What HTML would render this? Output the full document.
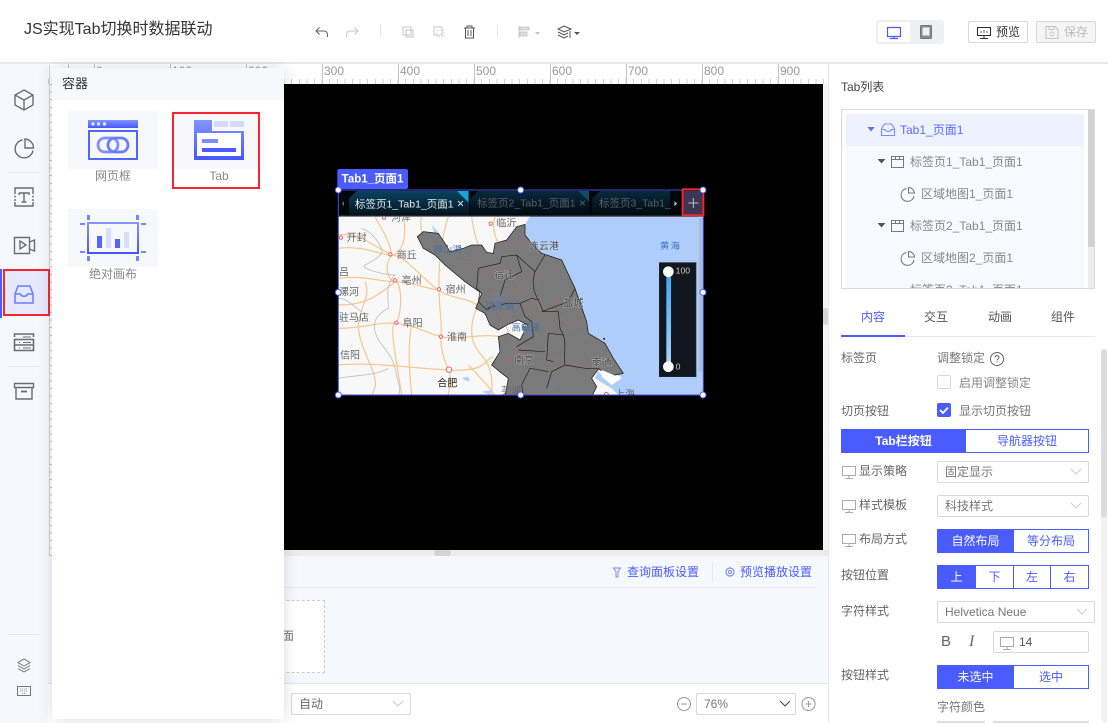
<!DOCTYPE html>
<html lang="zh"><head><meta charset="utf-8"><title>JS实现Tab切换时数据联动</title>
<style>
*{box-sizing:border-box}
html,body{margin:0;padding:0;width:1108px;height:723px;overflow:hidden;background:#fff;font-family:"Liberation Sans","Noto Sans CJK SC",sans-serif;font-size:12px;color:#666}
.a{position:absolute}
.t{position:absolute;white-space:nowrap;line-height:16px;font-size:12px;color:#666}
.sel{position:absolute;border:1px solid #d9d9d9;border-radius:2px;background:#fff;height:22px;line-height:20px;padding-left:7px;font-size:12px;color:#777}
.sel svg{position:absolute;right:6px;top:6px}
.b{position:absolute;text-align:center;font-size:12px;border:1px solid #4a5cff;color:#4a5cff;background:#fff;height:24px;line-height:22px}
.b.on{background:#4a5cff;color:#fff}
.tk{position:absolute;top:64px;width:1px;height:20px;background:#c4c4c4}
.rl{position:absolute;top:64px;color:#999;font-size:12px;line-height:14px}
svg{position:absolute;overflow:visible}
</style></head><body>

<!-- header -->
<div class="a" style="left:0;top:0;width:1108px;height:64px;background:#fff;border-bottom:2px solid #e6e8ee"></div>
<div class="t" style="left:24px;top:20px;font-size:16px;line-height:20px;color:#333">JS实现Tab切换时数据联动</div>

<svg style="left:0;top:0" width="1108" height="64" fill="none">
<path d="M319.500 27.500l-3.500 3.500 3.500 3.500M316 31h8a3.500 3.500 0 0 1 3.500 3.500V37" stroke="#666" stroke-width="1"/>
<path d="M354.500 27.500l3.500 3.500-3.500 3.500M358 31h-8a3.500 3.500 0 0 0-3.500 3.500V37" stroke="#c8c8c8" stroke-width="1"/>
<path d="M380.500 24v14M497.500 24v14" stroke="#e8e8e8"/>
<path d="M403 27h8v8h-8zM406 30h7v7h-7z" stroke="#c4c4c4"/>
<path d="M434 27h8v8h-8z" stroke="#c4c4c4"/><path d="M437 30h7v7h-7z" stroke="#ddd" stroke-dasharray="2 1"/>
<path d="M464 28h11M467 28v-2h5v2M465.500 28v10h8V28M468 30v6M471 30v6" stroke="#555"/>
<path d="M519 26v12" stroke="#c4c4c4"/><path d="M520 27h9v3h-9zM520 32h7v4h-7z" fill="#ddd" stroke="#c4c4c4" stroke-width=".8"/>
<path d="M535 32h5l-2.500 3z" fill="#c4c4c4"/>
<path d="M564 26l7 3-7 3-6-3zM558 32l6 3 4-2M558 35l6 3 4-2M570 31v7" stroke="#555"/>
<path d="M574 32h6l-3 3z" fill="#555"/>
</svg>

<div class="a" style="left:876px;top:20px;width:68px;height:24px;background:#eef0f4;border-radius:3px"></div>
<div class="a" style="left:878px;top:22px;width:32px;height:20px;background:#fff;border-radius:2px"></div>
<svg style="left:0;top:0" width="1108" height="64" fill="none">
<path d="M887.500 27.500h13v9h-13zM894 37v1.500M890 38.500h8" stroke="#4a5cff" stroke-width="1.200"/>
<rect x="920.500" y="25.500" width="11" height="13" rx="1" fill="#8a8a8a" stroke="#777"/><rect x="922.500" y="27.500" width="7" height="8" fill="#eef0f4"/>
</svg>
<div class="a" style="left:968px;top:21px;width:60px;height:22px;border:1px solid #d9d9d9;border-radius:2px;background:#fff"></div>
<svg style="left:0;top:0" width="1108" height="64" fill="none"><path d="M977.500 27.500h13v8h-13zM984 36v2M980 38.500h8" stroke="#333" stroke-width="1.100"/><path d="M981 33v-2M984 33v-3M987 33v-2" stroke="#555"/></svg>
<div class="t" style="left:996px;top:24px;color:#333">预览</div>
<div class="a" style="left:1036px;top:21px;width:60px;height:22px;border:1px solid #d9d9d9;border-radius:2px;background:#f5f5f5"></div>
<svg style="left:0;top:0" width="1108" height="64" fill="none"><path d="M1046 26.500h9l3 3v9h-12zM1049 26.500v3h5v-3" stroke="#c4c4c4"/><circle cx="1052" cy="34" r="2" stroke="#c4c4c4"/></svg>
<div class="t" style="left:1064px;top:24px;color:#bbb">保存</div>

<!-- canvas zone -->
<div class="a" style="left:48px;top:64px;width:780px;height:492px;background:#f4f4f4"></div>
<div class="a" style="left:48px;top:64px;width:780px;height:20px;background:#fff"></div>
<div class="a" style="left:48px;top:79px;width:780px;height:5px;background:repeating-linear-gradient(90deg,#d0d0d0 0,#d0d0d0 1px,transparent 1px,transparent 7.6px)"></div>
<div class="a" style="left:50px;top:84px;width:2px;height:472px;background:repeating-linear-gradient(180deg,#c4c4c4 0,#c4c4c4 1px,#fff 1px,#fff 7.6px)"></div>
<div class="tk" style="left:68px"></div>
<div class="tk" style="left:94px"></div><div class="rl" style="left:96px">0</div>
<div class="tk" style="left:170px"></div><div class="rl" style="left:172px">100</div>
<div class="tk" style="left:246px"></div><div class="rl" style="left:248px">200</div>
<div class="tk" style="left:322px"></div><div class="rl" style="left:324px">300</div>
<div class="tk" style="left:398px"></div><div class="rl" style="left:400px">400</div>
<div class="tk" style="left:474px"></div><div class="rl" style="left:476px">500</div>
<div class="tk" style="left:550px"></div><div class="rl" style="left:552px">600</div>
<div class="tk" style="left:626px"></div><div class="rl" style="left:628px">700</div>
<div class="tk" style="left:702px"></div><div class="rl" style="left:704px">800</div>
<div class="tk" style="left:778px"></div><div class="rl" style="left:780px">900</div>
<div class="a" style="left:284px;top:84px;width:539px;height:466px;background:#000"></div>
<div class="a" style="left:284px;top:550px;width:544px;height:6px;background:#ececec"></div>
<div class="a" style="left:434px;top:550px;width:17px;height:6px;background:#d4d4d4;border-radius:3px"></div>
<div class="a" style="left:823px;top:308px;width:5px;height:17px;background:#d4d4d4;border-radius:3px"></div>

<!-- bottom area -->
<div class="a" style="left:48px;top:556px;width:780px;height:128px;background:#f5f9fd;border-bottom:1px solid #e3e6ea"></div>
<div class="a" style="left:284px;top:587px;width:532px;height:1px;background:#e6eaee"></div>
<div class="a" style="left:200px;top:600px;width:125px;height:73px;background:#fff;border:1px dashed #ccc"></div>
<div class="t" style="left:282px;top:628px;color:#777">面</div>
<svg style="left:0;top:0" width="1108" height="723" fill="none">
<path d="M613.500 568h7l-2.500 3.500V577h-2v-5.500z" stroke="#7b8cff"/>
<circle cx="730" cy="572" r="4" stroke="#7b8cff" stroke-width="1.200"/><circle cx="730" cy="572" r="1.500" stroke="#7b8cff"/>
<path d="M712.500 562v20" stroke="#e6eaee"/>
</svg>
<div class="t" style="left:627px;top:564px;color:#4a5cff">查询面板设置</div>
<div class="t" style="left:740px;top:564px;color:#4a5cff">预览播放设置</div>
<div class="sel" style="left:291px;top:693px;width:120px;color:#666">自动<svg width="12" height="8" fill="none"><path d="M1 1l5 5 5-5" stroke="#ccc"/></svg></div>
<div class="sel" style="left:696px;top:693px;width:100px;color:#777">76%<svg width="12" height="8" fill="none" style="right:4px"><path d="M1 1l5 5 5-5" stroke="#444" stroke-width="1.100"/></svg></div>
<svg style="left:0;top:0" width="1108" height="723" fill="none">
<circle cx="684" cy="704" r="6.500" stroke="#999"/><path d="M681 704h6" stroke="#999"/>
<circle cx="808.500" cy="704" r="6.500" stroke="#999"/><path d="M805.500 704h6M808.500 701v6" stroke="#999"/>
</svg>

<!-- left sidebar -->
<div class="a" style="left:0;top:64px;width:48px;height:659px;background:#f5f9fd"></div>
<div class="a" style="left:49px;top:64px;width:1px;height:492px;background:#d4d4d4"></div>
<div class="a" style="left:3px;top:269px;width:47px;height:47px;background:#e5e9fb;border:2px solid #f8252f"></div>
<div class="a" style="left:0;top:269px;width:2px;height:49px;background:#4a5cff"></div>
<svg style="left:0;top:0" width="50" height="723" fill="none" stroke="#6a6d73" stroke-width="1.400">
<path d="M24 90l9 5v10l-9 5-9-5V95zM15 95l9 5 9-5M24 100v10"/>
<path d="M22.500 140a9 9 0 1 0 10.500 10.500"/><path d="M25 139v9h8.500a9 9 0 0 0-8.500-9z"/>
<path d="M8 172.500h32M8 366.500h32M8 634.500h32" stroke="#e6eaee" stroke-width="1"/>
<path d="M15 192v-4h18v4M15 202v4h18v-4"/><path d="M15 192v10M33 192v10" stroke-dasharray="2 1.500"/><path d="M19 193h10v2M24 193v9M21.500 202h5M19 195v-2"/>
<path d="M14.500 237.500h15v16h-15zM29.500 242l5-2v11l-5-2"/><path d="M20 241l6 4-6 4z"/>
<path d="M18 286h12l3 8v9H15v-9zM15 294h5.500c1 3 6 3 7 0H33" stroke="#6b7bff" stroke-width="1.500"/>
<path d="M14.500 337v-3h19v3M14.500 339.500h19v5.500h-19zM14.500 345h19v5.500h-19z" stroke-width="1.600"/><path d="M19 342.500h1M23 342.500h8M19 348h1M23 348h8M23 337h8" stroke-width="1"/>
<path d="M14.500 383.500h19v4h-19zM16 387.500v11.500h16v-11.500"/><path d="M21 391.500h6" stroke-width="1.800"/>
<path d="M24 659l6 3.500-6 3.500-6-3.500zM18 665.500l6 3.500 6-3.500M18 668.500l6 3.500 6-3.500" stroke="#777" stroke-width="1"/>
<path d="M17.500 686.500h13v9h-13z" stroke="#777" stroke-width="1"/><path d="M20 689h8M20 691h8M22 693.500h4" stroke="#999" stroke-width="1" stroke-dasharray="1 1"/>
</svg>

<!-- popup -->
<div class="a" style="left:52px;top:68px;width:232px;height:651px;background:#fff;box-shadow:0 0 14px rgba(0,0,0,.14)"></div>
<div class="a" style="left:52px;top:68px;width:232px;height:32px;background:#f6f8fb"></div>
<div class="t" style="left:62px;top:76px;color:#333;font-size:13px">容器</div>
<div class="a" style="left:68px;top:111px;width:90px;height:58px;background:#f6f8fc"></div>
<div class="a" style="left:172px;top:111px;width:92px;height:58px;background:#f6f8fc"></div>
<div class="a" style="left:68px;top:209px;width:90px;height:58px;background:#f6f8fc"></div>
<div class="a" style="left:172px;top:112px;width:88px;height:77px;border:2px solid #f8252f"></div>
<div class="t" style="left:68px;top:168px;width:90px;text-align:center;color:#888">网页框</div>
<div class="t" style="left:173px;top:168px;width:92px;text-align:center;color:#888">Tab</div>
<div class="t" style="left:68px;top:266px;width:90px;text-align:center;color:#888">绝对画布</div>
<svg style="left:0;top:0" width="284" height="300" fill="none">
<defs><linearGradient id="g" x1="0" y1="0" x2="0" y2="1"><stop offset="0" stop-color="#8494ff"/><stop offset="1" stop-color="#4358ff"/></linearGradient></defs>
<!-- web frame -->
<rect x="88" y="120" width="50" height="8" fill="url(#g)"/>
<circle cx="93" cy="124" r="1.700" fill="#dfe3ff"/><circle cx="98.500" cy="124" r="1.700" fill="#dfe3ff"/><circle cx="104.500" cy="124" r="1.700" fill="#dfe3ff"/>
<rect x="89" y="131" width="48" height="28" stroke="#5066ff" stroke-width="2"/>
<rect x="98" y="138" width="20" height="14" rx="7" stroke="#7f90ff" stroke-width="2.800"/>
<rect x="108" y="138" width="20" height="14" rx="7" stroke="#6a7dff" stroke-width="2.800"/>
<!-- tab -->
<path d="M194 120h18v11h32v29h-50z" fill="url(#g)"/>
<rect x="197" y="133" width="44" height="23" fill="#fff"/>
<rect x="214" y="121" width="14" height="6" fill="#d3daff"/><rect x="230" y="121" width="14" height="6" fill="#d3daff"/>
<rect x="202" y="139" width="16" height="4" fill="#7b8cff"/><rect x="202" y="148" width="34" height="4" fill="#4a5cff"/>
<!-- canvas -->
<rect x="88" y="223" width="50" height="30" stroke="url(#g)" stroke-width="2"/>
<rect x="97" y="236" width="5" height="12" fill="#5066ff"/><rect x="106" y="228" width="5" height="20" fill="#d8deff"/><rect x="115" y="239" width="5" height="9" fill="#5066ff"/><rect x="124" y="232" width="5" height="16" fill="#d8deff"/>
<path d="M87 215h3v5h-3zM136 215h3v5h-3zM80 223h5v2h-5zM141 223h5v2h-5zM80 251h5v2h-5zM141 251h5v2h-5zM87 256h3v5h-3zM136 256h3v5h-3z" fill="#7486ff"/>
</svg>

<!-- map component -->
<svg style="left:335px;top:165px" width="375" height="235" viewBox="0 0 1125 705" font-family="Liberation Sans, Noto Sans CJK SC, sans-serif">
<defs><clipPath id="mc"><rect x="10" y="155" width="1095" height="535"/></clipPath>
<linearGradient id="lg" x1="0" y1="0" x2="0" y2="1"><stop offset="0" stop-color="#39a5f7"/><stop offset="1" stop-color="#a9d8fa"/></linearGradient>
<linearGradient id="tg" x1="0" y1="0" x2="0" y2="1"><stop offset="0" stop-color="#0b4360"/><stop offset="1" stop-color="#03141f"/></linearGradient>
<linearGradient id="tg2" x1="0" y1="0" x2="0" y2="1"><stop offset="0" stop-color="#072a3d"/><stop offset="1" stop-color="#010a10"/></linearGradient></defs>
<g clip-path="url(#mc)">
<rect x="10" y="155" width="1095" height="535" fill="#afcdfb"/>
<path d="M10 155H585L570 178 570 210 590 235 620 265 680 285 720 370 755 470 760 505 810 535 835 580 865 625 830 632 790 612 780 640 830 670 850 690H10z" fill="#f8f8f8"/>
<path d="M780 610l80 25-40 15z" fill="#fff"/>
<g fill="none" stroke="#f7c588" stroke-width="3.500">
<path d="M10 250C90 240 130 270 170 270S260 340 310 375 420 390 450 450"/>
<path d="M205 155c10 60 0 100-30 115s-20 80 5 80 20 120 0 125 10 140 20 215"/>
<path d="M10 340c80-10 120 10 170 10s90 20 130 25"/>
<path d="M10 490c80 0 120-20 175-15s90 30 135 40 130-10 170 0"/>
<path d="M10 600c100-10 220 10 335 15s100-30 130-40"/>
<path d="M340 155c-20 60-30 140-28 220s10 100 6 140 20 100 25 100 0 70-5 75"/>
<path d="M410 155c10 80 30 110 60 150s-60 100-60 190 70 60 60 195"/>
<path d="M120 155c20 40 40 60 50 115M10 210c60-10 100 30 160 60"/>
<path d="M90 350c20 40-20 90-20 130s20 80 40 130 10 60 0 80"/>
<path d="M400 600c20 20 40 40 80 90"/>
<path d="M260 155c-10 40 10 80 30 110M10 420c60 0 100-10 170-70M230 475c-10 60-10 120 0 215M480 155c-10 30 0 60 10 80"/>
</g>
<g fill="none" stroke="#bcbec2" stroke-width="2.500">
<path d="M80 190c30 10 50 40 60 60s-30 40-50 50 60 30 90 30c-30 30-20 60-20 100-20 10-50 30-40 70s50 60 60 110 20 60 10 80"/>
<path d="M10 400c30 0 50 30 70 40"/><path d="M10 640c60-10 120-10 150-30"/>
</g>
<path d="M290 180l20 20-10 10zM370 240l20 20-25 10zM380 640c20-10 30 0 20 10zM440 680l30-5-5 15z" fill="#b8d2f8"/>
<path fill="#7a7a7a" stroke="#1b1b1b" stroke-width="2.200" stroke-linejoin="round" d="M247 215L265 200 310 205 330 235 345 260 385 250 410 240 440 240 455 262 475 265 480 235 515 225 545 185 570 178 570 210 590 235 620 265 680 285 720 370 755 470 760 505 810 535 835 580 865 625 830 632 790 612 770 640 785 665 770 695H510L520 640 500 625 470 600 495 560 490 515 520 505 555 525 578 480 550 465 515 480 490 495 465 480 450 445 422 430 440 385 390 350 330 300 300 270 265 250z"/>
<g fill="none" stroke="#98806a" stroke-width="2.500" opacity=".55">
<path d="M340 280c60 20 120 10 170 40s60 90 120 110 70 70 130 90M480 400c30 60 40 120 70 170M620 300c-30 70-10 160 30 230M500 560c80 10 180 10 290 60"/>
</g>
<g fill="none" stroke="#1f1f1f" stroke-width="2">
<path d="M430 310l65-15 5-20 45-5 15 50-50 25-15 50-10 20-30 20-25-25 5-30-10-10z"/>
<path d="M545 270l55 50 30-50M600 320c-10 30-5 60 10 85l-20-5-35 15 15 40 20 15 5 45-50 30M610 405l15 35 45 0 5 50 10 20 -45-5-5 80 20 5"/>
<path d="M455 430l60-15 40 0M685 510c10 30 0 60 5 90l-40 20-15 50M550 555l80 5M640 620l-55-10-25 50 5 30M690 600l60 10 40 0"/>
<path d="M720 370L700 410 620 440"/>
</g>
<path d="M480 375c20 10 30 40 10 55-15-5-20-35-10-55zM560 480l30 10 0 25-20 0zM650 640l10 25-15 5z" fill="#727e90"/>
<rect x="805" y="519" width="5" height="5" fill="#111"/>
<path d="M800 615l60 25-30 20-30-25z" fill="#fff"/>
<g font-size="30" fill="#666">
<text x="168" y="168" fill="#777">河泽</text><text x="484" y="185">临沂</text><text x="35" y="228">开封</text><text x="185" y="280">商丘</text><text x="200" y="357">亳州</text><text x="332" y="384">宿州</text>
<text x="203" y="484">阜阳</text><text x="336" y="526">淮南</text>
<text x="12" y="332">吕</text><text x="12" y="392">漯河</text><text x="12" y="468">驻马店</text><text x="15" y="581">信阳</text><text x="307" y="664" fill="#222">合肥</text><text x="498" y="688">芜湖</text><text x="840" y="698">上海</text>
</g>
<g font-size="30" fill="#4a4a4a" stroke="rgba(255,255,255,.35)" stroke-width="3" paint-order="stroke">
<text x="582" y="254">连云港</text><text x="478" y="340">宿迁</text><text x="685" y="424">盐城</text><text x="537" y="595">南京</text><text x="770" y="603">南通</text>
</g>
<g font-size="28" fill="#4a6ca3"><text x="296" y="262">微山湖</text><text x="452" y="434">洪泽湖</text><text x="530" y="497">高邮湖</text></g>
<text x="975" y="252" font-size="28" letter-spacing="4" fill="#3d75c9">黄海</text>
<g fill="#fff" stroke="#e8636d" stroke-width="3"><circle cx="147" cy="158" r="5"/><circle cx="467" cy="176" r="5"/><circle cx="18" cy="218" r="5"/><circle cx="166" cy="268" r="5"/><circle cx="180" cy="346" r="5"/><circle cx="312" cy="373" r="5"/><circle cx="563" cy="245" r="5" fill="#8a7474" stroke="#a06a6a"/><circle cx="458" cy="330" r="5" fill="#8a7474" stroke="#a06a6a"/><circle cx="667" cy="412" r="5" fill="#8a7474" stroke="#a06a6a"/><circle cx="184" cy="473" r="5"/><circle cx="318" cy="515" r="5"/><circle cx="750" cy="593" r="5" fill="#8a7474" stroke="#a06a6a"/><circle cx="516" cy="583" r="8" fill="#8a7474" stroke="#a06a6a"/><circle cx="342" cy="614" r="8"/><circle cx="814" cy="688" r="6"/></g>
<rect x="1089" y="155" width="16" height="535" fill="#b7cdf3"/><rect x="1091" y="160" width="12" height="460" fill="#9eb0cf" opacity=".6"/>
<rect x="973" y="293" width="110" height="342" fill="#12161e" stroke="#222a38" stroke-width="2"/>
<rect x="994" y="320" width="14" height="285" fill="url(#lg)"/>
<circle cx="1000" cy="320" r="16" fill="#fff"/><circle cx="1000" cy="605" r="16" fill="#fff"/>
<text x="1022" y="326" font-size="26" fill="#ccc">100</text><text x="1022" y="613" font-size="26" fill="#ccc">0</text>
</g>
<!-- tab bar -->
<rect x="12" y="78" width="1092" height="76" fill="#01060a"/>
<rect x="12" y="152" width="1092" height="3" fill="#666"/>
<path d="M42 100L66 78H402V150H42z" fill="url(#tg)"/>
<path d="M366 78h34v34z" fill="#19a1dc"/>
<path d="M406 100L430 78H762V150H406z" fill="url(#tg2)"/>
<path d="M730 78h32v32z" fill="#0c4d69"/>
<path d="M772 100L796 78H1005V150H772z" fill="url(#tg2)"/>
<path d="M27 108l-7 8 7 8z" fill="#566"/><path d="M1018 108l9 8-9 8z" fill="#9db7c4"/>
<text x="60" y="128" font-size="31.500" fill="#e8eef2">标签页1_Tab1_页面1</text><text x="366" y="127" font-size="36" fill="#e8eef2">×</text>
<text x="426" y="125" font-size="31.500" fill="#5a5f62">标签页2_Tab1_页面1</text><text x="732" y="126" font-size="36" fill="#5a5f62">×</text>
<text x="792" y="125" font-size="31.500" fill="#5a5f62">标签页3_Tab1_</text>
<rect x="1046" y="78" width="56" height="72" fill="#3b3653"/>
<path d="M1060 114h30M1075 99v30" stroke="#bfbfca" stroke-width="3"/>
<!-- selection -->
<rect x="10" y="75" width="1095" height="615" fill="none" stroke="#4350e0" stroke-width="3"/>
<rect x="7" y="12" width="212" height="60" rx="6" fill="#4a5cff"/>
<text x="20" y="53" font-size="34.500" font-weight="bold" fill="#fff">Tab1_页面1</text>
<rect x="1043" y="73" width="62" height="78" fill="none" stroke="#f8252f" stroke-width="6"/>
<g fill="#fff" stroke="#4a5cff" stroke-width="3"><circle cx="10" cy="75" r="9"/><circle cx="557" cy="75" r="9"/><circle cx="1104" cy="75" r="9"/><circle cx="10" cy="382" r="9"/><circle cx="1104" cy="382" r="9"/><circle cx="10" cy="690" r="9"/><circle cx="557" cy="690" r="9"/><circle cx="1104" cy="690" r="9"/></g>
</svg>

<!-- right panel -->
<div class="a" style="left:828px;top:64px;width:280px;height:659px;background:#fff;border-left:1px solid #e6e8ee"></div>
<div class="t" style="left:841px;top:79px;color:#444">Tab列表</div>
<div class="a" style="left:841px;top:109px;width:254px;height:180px;border:1px solid #d9d9d9;background:#fff;overflow:hidden">
  <div class="a" style="left:4px;top:4px;width:238px;height:176px;background:#f8f9fe"></div>
  <div class="a" style="left:4px;top:4px;width:238px;height:32px;background:#edf2fe"></div>
  <div class="a" style="left:246px;top:0;width:6px;height:178px;background:#eee"></div>
  <div class="a" style="left:246px;top:0;width:6px;height:137px;background:#d2d2d2"></div>
  <div class="t" style="left:58px;top:12px;color:#5c6cff">Tab1_页面1</div>
  <div class="t" style="left:68px;top:44px;color:#888">标签页1_Tab1_页面1</div>
  <div class="t" style="left:79px;top:76px;color:#888">区域地图1_页面1</div>
  <div class="t" style="left:68px;top:108px;color:#888">标签页2_Tab1_页面1</div>
  <div class="t" style="left:79px;top:140px;color:#888">区域地图2_页面1</div>
  <div class="t" style="left:68px;top:172px;color:#888">标签页3_Tab1_页面1</div>
</div>
<svg style="left:0;top:0" width="1108" height="290" fill="none">
<path d="M867.500 127h7l-3.500 4.500z" fill="#5c6cff"/>
<path d="M884.500 124h7l3 5v6.500h-13V129zM881.500 129.500h3.500c.5 2.500 5.500 2.500 6.500 0h3" stroke="#7b8cff" stroke-width="1.100"/>
<path d="M877.500 159h8l-4 4.500zM877.500 223h8l-4 4.500z" fill="#555"/>
<path d="M891.500 156.500h12v11h-12zM891.500 159.500h12M895.500 156.500v3M899.500 156.500v3M891.500 220.500h12v11h-12zM891.500 223.500h12M895.500 220.500v3M899.500 220.500v3" stroke="#777"/>
<path d="M906.500 188.500a6.500 6.500 0 1 0 7.500 7.500M908.500 187.500v5.500h6a6 6 0 0 0-6-5.500zM906.500 252.500a6.500 6.500 0 1 0 7.500 7.500M908.500 251.500v5.500h6a6 6 0 0 0-6-5.500z" stroke="#777"/>
</svg>
<div class="a" style="left:841px;top:336px;width:254px;height:1px;background:#e8e8e8"></div>
<div class="a" style="left:841px;top:335px;width:64px;height:2px;background:#4a5cff"></div>
<div class="t" style="left:861px;top:309px;color:#4a5cff">内容</div>
<div class="t" style="left:924px;top:309px;color:#555">交互</div>
<div class="t" style="left:988px;top:309px;color:#555">动画</div>
<div class="t" style="left:1051px;top:309px;color:#555">组件</div>

<div class="a" style="left:1101px;top:349px;width:6px;height:374px;background:#f2f2f2;border-radius:3px"></div>
<div class="a" style="left:1101px;top:349px;width:6px;height:169px;background:#dcdcdc;border-radius:3px"></div>

<div class="t" style="left:841px;top:350px">标签页</div>
<div class="t" style="left:937px;top:350px;color:#777">调整锁定</div>
<svg style="left:0;top:0" width="1108" height="723" fill="none"><circle cx="997" cy="359" r="6.500" stroke="#666"/><path d="M995 357.500c0-2.500 4-2.500 4 0 0 1.500-2 1.500-2 3M997 361.500v1" stroke="#666"/></svg>
<div class="a" style="left:937px;top:375px;width:14px;height:14px;border:1px solid #d9d9d9;border-radius:2px;background:#fff"></div>
<div class="t" style="left:959px;top:375px;color:#888">启用调整锁定</div>
<div class="t" style="left:841px;top:403px">切页按钮</div>
<div class="a" style="left:937px;top:403px;width:14px;height:14px;background:#4a5cff;border-radius:2px"></div>
<svg style="left:0;top:0" width="1108" height="723" fill="none"><path d="M940 410l3 3 5-5.500" stroke="#fff" stroke-width="1.800"/></svg>
<div class="t" style="left:959px;top:403px;color:#777">显示切页按钮</div>
<div class="b on" style="left:841px;top:429px;width:125px;font-weight:bold">Tab栏按钮</div>
<div class="b" style="left:965px;top:429px;width:124px">导航器按钮</div>

<svg style="left:0;top:0" width="1108" height="723" fill="none" stroke="#aaa">
<path d="M842.500 466.500h13v9h-13zM849 476v2M845 478.500h8"/>
<path d="M842.500 500.500h13v9h-13zM849 510v2M845 512.500h8"/>
<path d="M842.500 534.500h13v9h-13zM849 544v2M845 546.500h8"/>
</svg>
<div class="t" style="left:859px;top:463px">显示策略</div>
<div class="sel" style="left:937px;top:461px;width:152px">固定显示<svg width="12" height="8" fill="none"><path d="M1 1l5 5 5-5" stroke="#ccc"/></svg></div>
<div class="t" style="left:859px;top:497px">样式模板</div>
<div class="sel" style="left:937px;top:495px;width:152px">科技样式<svg width="12" height="8" fill="none"><path d="M1 1l5 5 5-5" stroke="#ccc"/></svg></div>
<div class="t" style="left:859px;top:531px">布局方式</div>
<div class="b on" style="left:937px;top:529px;width:77px">自然布局</div>
<div class="b" style="left:1013px;top:529px;width:76px">等分布局</div>
<div class="t" style="left:841px;top:567px">按钮位置</div>
<div class="b on" style="left:937px;top:565px;width:39px">上</div>
<div class="b" style="left:975px;top:565px;width:39px">下</div>
<div class="b" style="left:1013px;top:565px;width:38px">左</div>
<div class="b" style="left:1050px;top:565px;width:39px">右</div>
<div class="t" style="left:841px;top:603px">字符样式</div>
<div class="sel" style="left:937px;top:601px;width:158px">Helvetica Neue<svg width="12" height="8" fill="none"><path d="M1 1l5 5 5-5" stroke="#ccc"/></svg></div>
<div class="t" style="left:941px;top:633px;font-size:15px;line-height:18px;color:#666">B</div>
<div class="t" style="left:969px;top:633px;font-size:16px;line-height:18px;color:#666;font-style:italic;font-family:'Liberation Serif',serif">I</div>
<div class="a" style="left:993px;top:631px;width:96px;height:22px;border:1px solid #d9d9d9;border-radius:2px"></div>
<svg style="left:0;top:0" width="1108" height="723" fill="none"><path d="M1000.500 637.500h13v9h-13zM1007 647v2M1003 649.500h8" stroke="#aaa"/></svg>
<div class="t" style="left:1019px;top:634px;color:#555">14</div>
<div class="t" style="left:841px;top:667px">按钮样式</div>
<div class="b on" style="left:937px;top:665px;width:77px">未选中</div>
<div class="b" style="left:1013px;top:665px;width:76px">选中</div>
<div class="t" style="left:937px;top:699px;color:#777">字符颜色</div>
<div class="a" style="left:937px;top:721px;width:48px;height:2px;background:#ddd"></div>
<div class="a" style="left:993px;top:721px;width:96px;height:2px;background:#ddd"></div>
</body></html>
